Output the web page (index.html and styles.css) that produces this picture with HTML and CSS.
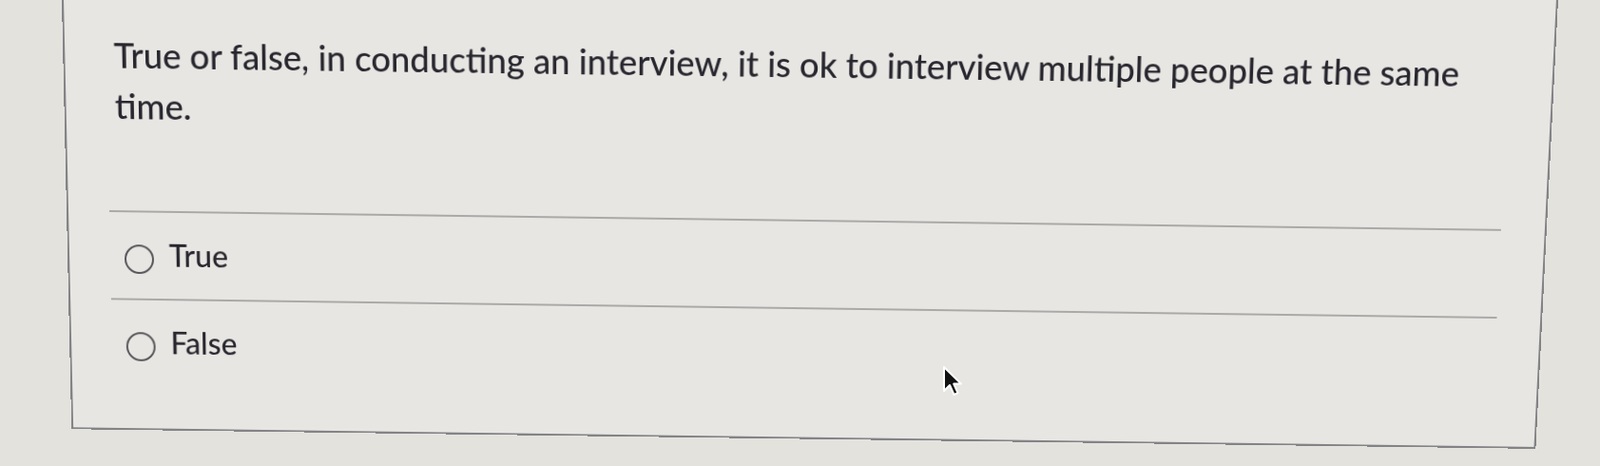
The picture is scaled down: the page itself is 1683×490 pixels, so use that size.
FILE: index.html
```html
<!DOCTYPE html>
<html lang="en">
<head>
<meta charset="utf-8">
<title>Quiz question</title>
<link rel="stylesheet" href="styles.css">
</head>
<body>
<div class="screen">
  <div class="card">
    <div class="question">True or false, in conducting an interview, it is ok to interview multiple people at the same time.</div>
    <div class="answers">
      <label class="answer"><span class="radio"></span><span class="label">True</span></label>
      <label class="answer"><span class="radio"></span><span class="label">False</span></label>
    </div>
  </div>
  <svg class="cursor" width="22" height="34" viewBox="0 0 22 34" aria-hidden="true">
    <path d="M2 2 L2 27 L8 21 L12.5 31 L16.5 29.2 L12.2 19.6 L20 19.6 Z" fill="#111" stroke="#fff" stroke-width="2" stroke-linejoin="round"/>
  </svg>
</div>
</body>
</html>
```

FILE: styles.css
```css
html, body {
  margin: 0;
  padding: 0;
}

body {
  background: #e3e2dd;
  font-family: "Lato", "Open Sans", sans-serif;
  color: #28262e;
  overflow: hidden;
}

.screen {
  position: relative;
  width: 1683px;
  height: 490px;
  overflow: hidden;
}

.card {
  box-sizing: border-box;
  width: 1558px;
  height: 495px;
  margin: -30px 0 0 70px;
  padding: 70px 46px 46px 43px;
  background: #e7e6e2;
  border: 2px solid #838387;
  transform: perspective(1500px) rotateX(-4deg) rotate(0.78deg);
  transform-origin: 50% 50%;
}

.question {
  padding-left: 8px;
  font-size: 36.2px;
  font-weight: 500;
  line-height: 53px;
  margin-bottom: 83px;
}

.answers {
  display: flex;
  flex-direction: column;
}

.answer {
  box-sizing: border-box;
  height: 93px;
  display: flex;
  align-items: center;
  gap: 16px;
  padding-left: 15px;
  padding-top: 8px;
  border-top: 2px solid #aaa9a8;
  font-size: 32px;
  font-weight: 500;
}

.radio {
  box-sizing: border-box;
  width: 31px;
  height: 31px;
  border: 2px solid #56555a;
  border-radius: 50%;
}

.label {
  line-height: 1.2;
  padding-bottom: 8px;
}

.cursor {
  position: absolute;
  left: 991px;
  top: 384px;
}
```
